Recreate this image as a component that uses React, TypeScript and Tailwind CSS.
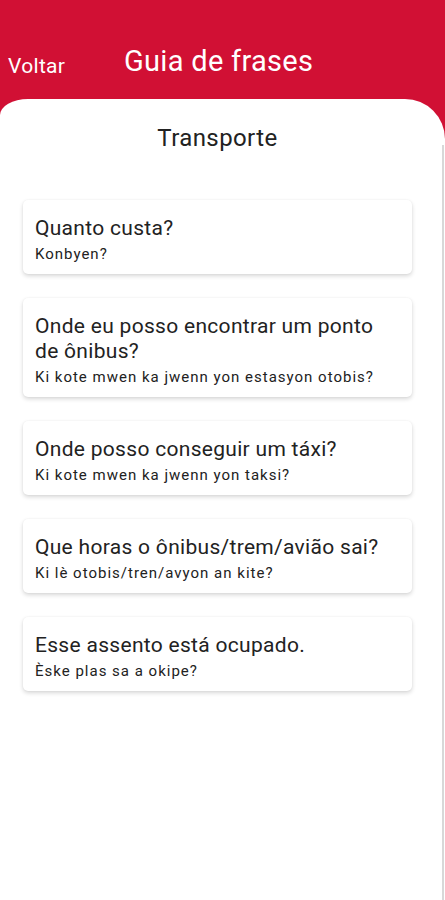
import React from "react";

const phrases = [
  { pt: "Quanto custa?", ht: "Konbyen?" },
  { pt: "Onde eu posso encontrar um ponto de ônibus?", ht: "Ki kote mwen ka jwenn yon estasyon otobis?" },
  { pt: "Onde posso conseguir um táxi?", ht: "Ki kote mwen ka jwenn yon taksi?" },
  { pt: "Que horas o ônibus/trem/avião sai?", ht: "Ki lè otobis/tren/avyon an kite?" },
  { pt: "Esse assento está ocupado.", ht: "Èske plas sa a okipe?" },
];

export default function App() {
  return (
    <div
      className="relative flex h-[900px] w-[445px] flex-col overflow-hidden bg-[#d11034]"
      style={{ fontFamily: "Roboto, 'Noto Sans', sans-serif" }}
    >
      <div className="relative h-[99px] shrink-0">
        <span className="absolute left-[8px] top-[56px] text-[21px] leading-none tracking-[0.3px] text-white">Voltar</span>
        <span className="absolute left-[124px] top-[47px] text-[29px] leading-none tracking-[0.3px] text-white">Guia de frases</span>
      </div>
      <div className="flex flex-1 flex-col rounded-tl-[28px_16px] rounded-tr-[40px] bg-white">
        <div className="pr-[10px] pt-[27px] text-center text-[24px] leading-none tracking-[0.4px] text-[#222]">Transporte</div>
        <div className="mt-[50px] flex flex-col gap-[24px] pl-[23px]">
          {phrases.map((p) => (
            <div
              key={p.pt}
              className="w-[389px] rounded-[5px] bg-white px-[12px] pb-[10px] pt-[16px] shadow-[0_2px_4px_rgba(0,0,0,0.16),0_0_2px_rgba(0,0,0,0.05)]"
            >
              <div className="text-[21px] leading-[25px] tracking-[0.3px] text-[#222]">{p.pt}</div>
              <div className="mt-[3px] text-[15px] leading-[20px] tracking-[1px] text-[#222]">{p.ht}</div>
            </div>
          ))}
        </div>
      </div>
      <div className="absolute bottom-0 right-[1px] top-[145px] w-[2px] bg-[#d8d8d8]" />
    </div>
  );
}
